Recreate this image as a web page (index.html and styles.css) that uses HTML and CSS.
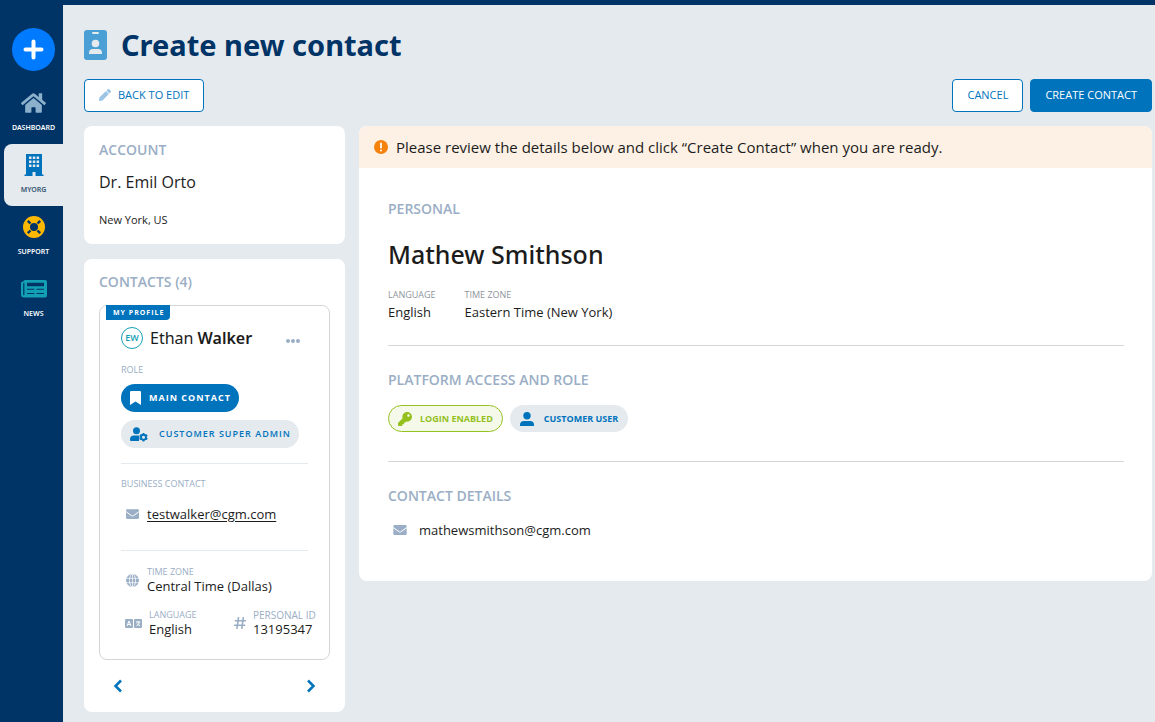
FILE: index.html
```html
<!DOCTYPE html>
<html lang="en">
<head>
<meta charset="utf-8">
<title>Create new contact</title>
<link rel="stylesheet" href="styles.css">
</head>
<body>
<svg class="symbols" aria-hidden="true">
  <symbol id="envelope" viewBox="0 64 512 384"><path d="M502.3 190.8c3.9-3.1 9.7-.2 9.7 4.7V400c0 26.5-21.5 48-48 48H48c-26.5 0-48-21.5-48-48V195.6c0-5 5.7-7.8 9.7-4.7 22.4 17.4 52.1 39.5 154.1 113.6 21.1 15.4 56.7 47.8 92.2 47.6 35.7.3 72-32.8 92.3-47.6 102-74.1 131.6-96.3 154-113.7zM256 320c23.2.4 56.6-29.2 73.4-41.4 132.7-96.3 142.8-104.7 173.4-128.7 5.8-4.5 9.2-11.5 9.2-18.9v-19c0-26.5-21.5-48-48-48H48c-26.5 0-48 21.5-48 48v19c0 7.4 3.4 14.3 9.2 18.9 30.6 23.9 40.7 32.4 173.4 128.7 16.8 12.2 50.2 41.8 73.4 41.4z"/></symbol>
</svg>
<div class="app">
  <nav class="sidebar" aria-label="Main">
    <button class="add" type="button" aria-label="Add"><svg width="21" height="21" viewBox="0 0 21 21"><path d="M10.500 2.500v16M2.500 10.500h16" fill="none" stroke="#fff" stroke-width="4" stroke-linecap="round"/></svg></button>
    <a class="nav-item" href="#">
      <svg class="nav-icon" width="25" height="22" viewBox="0 16 576 480" fill="#8bb0cc"><path d="M280.37 148.26L96 300.11V464a16 16 0 0 0 16 16l112.06-.29a16 16 0 0 0 15.92-16V368a16 16 0 0 1 16-16h64a16 16 0 0 1 16 16v95.64a16 16 0 0 0 16 16.05L464 480a16 16 0 0 0 16-16V300L295.67 148.26a12.19 12.19 0 0 0-15.3 0zM571.6 251.47L488 182.56V44.05a12 12 0 0 0-12-12h-56a12 12 0 0 0-12 12v72.61L318.47 43a48 48 0 0 0-61 0L4.34 251.47a12 12 0 0 0-1.6 16.9l25.5 31A12 12 0 0 0 45.15 301l235.22-193.74a12.19 12.19 0 0 1 15.3 0L530.9 301a12 12 0 0 0 16.9-1.6l25.5-31a12 12 0 0 0-1.7-16.93z"/></svg>
      <span>DASHBOARD</span>
    </a>
    <a class="nav-item active" href="#" aria-current="page">
      <svg class="nav-icon" width="20" height="22" viewBox="0 0 20 22"><path fill="#0073bd" fill-rule="evenodd" d="M2 0h16v20.500h1.500v1.500h-8v-4h-3v4h-8v-1.500H2zM5 2.500v2.500h2.500V2.500zm3.800 0v2.500h2.500V2.500zm3.800 0v2.500h2.500V2.500zM5 6.500v2.500h2.500V6.500zm3.800 0v2.500h2.500V6.500zm3.800 0v2.500h2.500V6.500zM5 10.500v2.500h2.500v-2.500zm3.800 0v2.500h2.500v-2.500zm3.800 0v2.500h2.500v-2.500z"/></svg>
      <span>MYORG</span>
    </a>
    <a class="nav-item" href="#">
      <svg class="nav-icon" width="22" height="22" viewBox="0 0 22 22"><circle cx="11" cy="11" r="7.500" fill="none" stroke="#ffb800" stroke-width="7"/><path d="M4.800 4.800L7.500 7.500M17.200 4.800L14.500 7.500M4.800 17.200L7.500 14.500M17.200 17.200L14.500 14.500" stroke="#003366" stroke-width="2.400"/></svg>
      <span>SUPPORT</span>
    </a>
    <a class="nav-item" href="#">
      <svg class="nav-icon" width="26" height="20" viewBox="0 -2 26 20"><path fill="#14a0b4" fill-rule="evenodd" d="M4 0h20q2 0 2 2v13.500q0 2-2 2H3q-3 0-3-3V3q0-1.500 1.500-1.500H2.500Q2.500 0 4 0zM2.200 3v11.500q0 .8.600.8t.6-.8V3zM6 2.800v3.400h17V2.800zM6 8.800v1h7.300v-1zm9.500 0v1H23v-1zM6 13v1h7.300v-1zm9.500 0v1H23v-1z"/></svg>
      <span>NEWS</span>
    </a>
  </nav>

  <main class="main">
    <header class="title-row">
      <svg width="23" height="30" viewBox="0 0 23 30"><rect width="23" height="30" rx="3" fill="#4a9fd5"/><rect x="8" y="2" width="7" height="2" rx="1" fill="#e5eaee"/><circle cx="11.500" cy="13.500" r="3.800" fill="#e5eaee"/><path d="M5 24v-1q0-4 4-4h5q4 0 4 4v1z" fill="#e5eaee"/></svg>
      <h1>Create new contact</h1>
    </header>
    <div class="actions">
      <button class="btn" type="button"><svg width="12" height="12" viewBox="0 0 512 512" fill="#9cc5e5"><path d="M497.900 142.100l-46.100 46.100c-4.700 4.700-12.300 4.700-17 0l-111-111c-4.700-4.700-4.700-12.300 0-17l46.100-46.100c18.700-18.700 49.100-18.700 67.900 0l60.100 60.100c18.800 18.700 18.800 49.100 0 67.900zM284.200 99.800L21.600 362.400.4 483.900c-2.900 16.400 11.400 30.600 27.800 27.800l121.500-21.300 262.600-262.600c4.700-4.700 4.700-12.300 0-17l-111-111c-4.800-4.700-12.400-4.700-17.100 0z"/></svg>BACK TO EDIT</button>
      <div class="actions-end">
        <button class="btn" type="button">CANCEL</button>
        <button class="btn primary" type="button">CREATE CONTACT</button>
      </div>
    </div>

    <div class="columns">
      <div class="side">
        <section class="card account">
          <h2>ACCOUNT</h2>
          <p class="account-name">Dr. Emil Orto</p>
          <p class="account-city">New York, US</p>
        </section>

        <section class="card contacts">
          <h2>CONTACTS (4)</h2>
          <article class="profile">
            <span class="ribbon">MY PROFILE</span>
            <div class="person">
              <span class="avatar">EW</span>
              <h3>Ethan <b>Walker</b></h3>
              <button class="more" type="button" aria-label="More"><svg width="14" height="4" viewBox="0 0 14 4" fill="#9aaec5"><circle cx="2" cy="2" r="2"/><circle cx="7" cy="2" r="2"/><circle cx="12" cy="2" r="2"/></svg></button>
            </div>
            <p class="label">ROLE</p>
            <div class="pills">
              <span class="pill solid wide"><svg width="11" height="14" viewBox="0 0 11 14"><path d="M0 14V1q0-1 1-1h9q1 0 1 1v13l-5.500-3.500z" fill="#fff"/></svg>MAIN CONTACT</span>
              <span class="pill wide admin"><svg width="18" height="15" viewBox="0 0 18 15" fill="#0073bd"><circle cx="6.500" cy="3.700" r="3.500"/><path d="M0 14v-1.500Q0 8.500 4 8.500h4.500l1 1-.5 4.500H1q-1 0-1-1z"/><circle cx="13.500" cy="10.200" r="2.500" fill="none" stroke="#0073bd" stroke-width="1.900"/><path d="M13.500 6v1.500M13.500 13v1.500M9.800 8.100l1.200.7M16 11.600l1.300.7M9.800 12.300l1.200-.7M16 8.800l1.300-.7" stroke="#0073bd" stroke-width="1.800"/></svg>CUSTOMER SUPER ADMIN</span>
            </div>
            <div class="block">
              <p class="label">BUSINESS CONTACT</p>
              <p class="mail"><svg width="13" height="10" fill="#9aaec5"><use href="#envelope"/></svg><a href="mailto:testwalker@cgm.com">testwalker@cgm.com</a></p>
            </div>
            <dl class="facts">
              <div class="fact full">
                <svg class="fact-icon" width="15" height="13" viewBox="-1 0 15 13"><circle cx="6.500" cy="6.500" r="6.500" fill="#9aaec5"/><path d="M0 4.300h13M0 8.700h13M6.500 0v13" stroke="#fff" stroke-width=".7"/><ellipse cx="6.500" cy="6.500" rx="3" ry="6.500" fill="none" stroke="#fff" stroke-width=".8"/></svg>
                <div><dt>TIME ZONE</dt><dd>Central Time (Dallas)</dd></div>
              </div>
              <div class="fact">
                <svg class="fact-icon" width="17" height="9" viewBox="0 0 17 9"><rect width="8" height="9" rx="1" fill="#9aaec5"/><rect x="9" width="8" height="9" rx="1" fill="#9aaec5"/><path d="M2 7l2-5 2 5M2.800 5.500h2.400M11 3h4.200M13 2v1M14.500 3q-.5 2.500-3 3.800M12 4.500q1 1.500 3 2.300" fill="none" stroke="#fff"/></svg>
                <div><dt>LANGUAGE</dt><dd>English</dd></div>
              </div>
              <div class="fact">
                <svg class="fact-icon" width="12" height="12" viewBox="0 0 12 12"><path d="M4.500.7L3 11.300M9.300.7L7.800 11.300M1.300 3.700h10M.7 8.300h10" fill="none" stroke="#9aaec5" stroke-width="1.600" stroke-linecap="round"/></svg>
                <div><dt class="wide-label">PERSONAL ID</dt><dd>13195347</dd></div>
              </div>
            </dl>
          </article>
          <div class="pager">
            <button type="button" aria-label="Previous"><svg width="10" height="14" viewBox="0 0 10 14"><path d="M8 1.500L2.500 7 8 12.500" fill="none" stroke="#0073bd" stroke-width="2.500"/></svg></button>
            <button type="button" aria-label="Next"><svg width="10" height="14" viewBox="0 0 10 14"><path d="M2 1.500L7.500 7 2 12.500" fill="none" stroke="#0073bd" stroke-width="2.500"/></svg></button>
          </div>
        </section>
      </div>

      <section class="card review">
        <p class="notice"><svg width="14" height="14" viewBox="0 0 14 14"><circle cx="7" cy="7" r="7" fill="#f5820d"/><path d="M7 3.500v4" stroke="#fdf1e5" stroke-width="2" stroke-linecap="round"/><circle cx="7" cy="10.500" r="1.100" fill="#fdf1e5"/></svg>Please review the details below and click “Create Contact” when you are ready.</p>
        <div class="review-body">
          <section class="group">
            <h2>PERSONAL</h2>
            <p class="full-name">Mathew Smithson</p>
            <dl class="details">
              <div><dt>LANGUAGE</dt><dd>English</dd></div>
              <div><dt>TIME ZONE</dt><dd>Eastern Time (New York)</dd></div>
            </dl>
          </section>
          <section class="group access">
            <h2>PLATFORM ACCESS AND ROLE</h2>
            <div class="roles">
              <span class="pill green"><svg width="14" height="14" viewBox="0 0 512 512" fill="#95c11f"><path d="M512 176.001C512 273.203 433.202 352 336 352c-11.220 0-22.190-1.062-32.827-3.069l-24.012 27.014A23.999 23.999 0 0 1 261.223 384H224v40c0 13.255-10.745 24-24 24h-40v40c0 13.255-10.745 24-24 24H24c-13.255 0-24-10.745-24-24v-78.059c0-6.365 2.529-12.470 7.029-16.971l161.802-161.802C163.108 213.814 160 195.271 160 176 160 78.798 238.797.001 335.999 0 433.488-.001 512 78.511 512 176.001zM336 128c0 26.510 21.490 48 48 48s48-21.490 48-48-21.490-48-48-48-48 21.490-48 48z"/></svg>LOGIN ENABLED</span>
              <span class="pill user"><svg width="14" height="14" viewBox="0 0 14 14" fill="#0073bd"><circle cx="7" cy="3.700" r="3.700"/><path d="M0 14v-1q0-4 4-4h6q4 0 4 4v1z"/></svg>CUSTOMER USER</span>
            </div>
          </section>
          <section class="group">
            <h2>CONTACT DETAILS</h2>
            <p class="contact-mail"><svg width="14" height="10" fill="#9aaec5"><use href="#envelope"/></svg>mathewsmithson@cgm.com</p>
          </section>
        </div>
      </section>
    </div>
  </main>
</div>
</body>
</html>
```

FILE: styles.css
```css
* { box-sizing: border-box; }

body {
  margin: 0;
  background: #e5eaee;
  color: #1c1c1c;
  font-family: "Open Sans", "Noto Sans", sans-serif;
  font-size: 13px;
  line-height: 18px;
}

h1, h2, h3, p, dl, dd { margin: 0; }
svg { display: block; flex: none; }
.symbols { position: absolute; width: 0; height: 0; }

button {
  font: inherit;
  cursor: pointer;
}

.app {
  display: flex;
  min-height: 100vh;
  border-top: 5px solid #003366;
}

.sidebar {
  display: flex;
  flex-direction: column;
  flex: none;
  width: 63px;
  padding: 23px 0 0 4px;
  background: #003366;
}

.add {
  display: grid;
  place-items: center;
  width: 43px;
  height: 43px;
  margin: 0 0 11px 8px;
  padding: 0;
  border: 0;
  border-radius: 50%;
  background: #007aff;
}

.nav-item {
  display: flex;
  flex-direction: column;
  align-items: center;
  justify-content: space-between;
  height: 62px;
  padding: 10px 0;
  border-radius: 8px 0 0 8px;
  color: #fff;
  font-family: "Noto Sans", sans-serif;
  font-size: 7px;
  font-weight: 600;
  line-height: 12px;
  text-decoration: none;
}

.nav-item.active {
  background: #e5eaee;
  color: #33536f;
}

.main {
  flex: 1;
  min-width: 0;
  padding: 21px 3px 10px 21px;
}

.title-row {
  display: flex;
  align-items: center;
  gap: 14px;
  height: 38px;
}

h1 {
  color: #003366;
  font-family: "Noto Sans", sans-serif;
  font-size: 29px;
  font-weight: 700;
  line-height: 38px;
}

.actions, .actions-end {
  display: flex;
  justify-content: space-between;
  gap: 7px;
}

.actions { margin: 15px 0 14px; }

.btn {
  display: flex;
  align-items: center;
  gap: 7px;
  height: 33px;
  padding: 0 14px 2px;
  border: 1px solid #0073bd;
  border-radius: 4px;
  background: #fff;
  color: #0073bd;
  font-size: 11px;
  font-weight: 500;
}

.btn.primary {
  background: #0073bd;
  color: #fff;
}

.columns {
  display: flex;
  align-items: flex-start;
  gap: 14px;
}

.side {
  display: grid;
  grid-template-columns: minmax(0, 1fr);
  flex: none;
  gap: 15px;
  width: 261px;
}

.card {
  border-radius: 8px;
  background: #fff;
}

h2 {
  color: #9aaec5;
  font-size: 14px;
  font-weight: 600;
  line-height: 20px;
}

.account { padding: 14px 15px 16px; }

.account-name {
  margin: 10px 0 18px;
  font-size: 16px;
  font-weight: 500;
  line-height: 24px;
}

.account-city {
  font-size: 11px;
  font-weight: 500;
  line-height: 16px;
}

.contacts { padding: 13px 15px 16px; }

.profile {
  position: relative;
  margin-top: 13px;
  padding: 20px 10px 22px 21px;
  border: 1px solid #d3d6d9;
  border-radius: 8px;
}

.ribbon {
  position: absolute;
  top: -1px;
  left: 6px;
  padding: 0 6px 0 7px;
  border-radius: 0 0 4px 0;
  background: #0073bd;
  color: #fff;
  font-size: 7px;
  font-weight: 700;
  letter-spacing: 1px;
  line-height: 15px;
}

.person {
  display: flex;
  align-items: center;
  gap: 7px;
}

.avatar {
  display: grid;
  place-items: center;
  width: 22px;
  height: 22px;
  border: 1px solid #14a0b4;
  border-radius: 50%;
  color: #14a0b4;
  font-size: 9px;
  font-weight: 600;
}

h3 {
  font-family: "Noto Sans", sans-serif;
  font-size: 16px;
  font-weight: 400;
  line-height: 24px;
}

h3 b { font-weight: 600; }

.more {
  margin: 6px 19px 0 auto;
  padding: 0;
  border: 0;
  background: none;
}

.label, dt {
  color: #9aaec5;
  font-size: 9px;
  line-height: 12px;
}

.person + .label { margin-top: 14px; }

.pills {
  display: grid;
  justify-items: start;
  gap: 8px;
  margin: 8px 0 15px;
}

.pill {
  display: inline-flex;
  align-items: center;
  height: 27px;
  padding: 0 9px;
  border-radius: 14px;
  background: #e5eaee;
  color: #0073bd;
  font-size: 9px;
  font-weight: 700;
  white-space: nowrap;
}

.pill.solid {
  gap: 8px;
  background: #0073bd;
  color: #fff;
}

.pill.wide {
  height: 28px;
  padding-right: 8px;
  letter-spacing: 1px;
}

.pill.admin {
  gap: 11px;
  font-weight: 600;
}

.block, .facts {
  margin-right: 11px;
  border-top: 1px solid #e5eaee;
}

.block { padding: 14px 0 26px; }

.mail, .contact-mail {
  display: flex;
  align-items: center;
  gap: 8px;
  line-height: 20px;
}

.mail {
  margin-top: 14px;
  padding-left: 5px;
}

.mail a {
  color: inherit;
  text-underline-offset: 2px;
}

.facts {
  display: grid;
  grid-template-columns: 109px auto;
  gap: 15px 0;
  padding-top: 15px;
}

.fact {
  display: flex;
  align-items: center;
  gap: 7px;
  padding-left: 4px;
  white-space: nowrap;
}

.fact.full { grid-column: 1 / -1; }
.fact dd { line-height: 16px; }
dt.wide-label { font-size: 10px; }

.pager {
  display: flex;
  justify-content: space-between;
  padding: 19px 14px 3px;
}

.pager button {
  padding: 0;
  border: 0;
  background: none;
}

.review {
  flex: 1;
  min-width: 0;
  overflow: hidden;
}

.notice {
  display: flex;
  align-items: center;
  gap: 8px;
  padding: 11px 15px;
  background: #fdf1e5;
  font-size: 15px;
  line-height: 20px;
}

.review-body { padding: 31px 28px 41px 29px; }

.group + .group {
  padding-top: 24px;
  border-top: 1px solid #d3d6d9;
}

.full-name {
  margin: 19px 0;
  font-family: "Noto Sans", sans-serif;
  font-size: 25px;
  font-weight: 500;
  line-height: 32px;
}

.details {
  display: flex;
  gap: 29px;
  padding-bottom: 24px;
}

.details dt { color: #8e959c; }
.details dd { margin-top: 2px; }

.access { padding-bottom: 29px; }

.roles {
  display: flex;
  gap: 7px;
  margin-top: 15px;
}

.pill.green {
  gap: 8px;
  border: 1px solid #95c11f;
  background: #f4f9e9;
  color: #95c11f;
}

.pill.user {
  gap: 10px;
  padding: 0 10px;
}

.contact-mail {
  gap: 12px;
  margin-top: 14px;
  padding-left: 5px;
}
```
